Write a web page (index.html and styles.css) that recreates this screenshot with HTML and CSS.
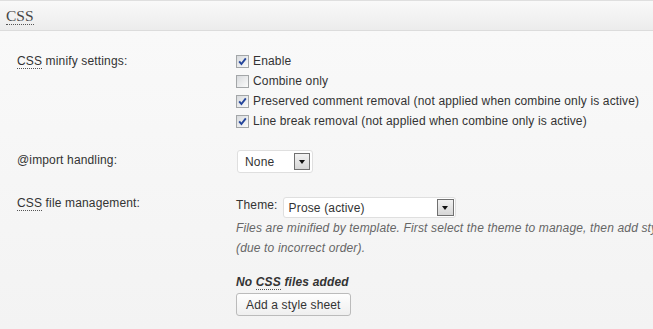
FILE: index.html
```html
<!DOCTYPE html>
<html lang="en">
<head>
    <meta charset="UTF-8">
    <meta name="viewport" content="width=device-width, initial-scale=1.0">
    <title>CSS settings</title>
    <link rel="stylesheet" href="styles.css">
</head>
<body>
    <div class="panel-header">
        <h3><abbr title="Cascading Style Sheets">CSS</abbr></h3>
    </div>
    <div class="panel-body">
        <div class="form-row row-minify">
            <div class="label"><abbr title="Cascading Style Sheets">CSS</abbr> minify settings:</div>
            <div class="field">
                <label class="check">
                    <span class="box"><svg width="11" height="11" viewBox="0 0 11 11"><path d="M2.2 5.4 L4.4 8 L8.8 2.4" /></svg></span>
                    Enable
                </label>
                <label class="check">
                    <span class="box"></span>
                    Combine only
                </label>
                <label class="check">
                    <span class="box"><svg width="11" height="11" viewBox="0 0 11 11"><path d="M2.2 5.4 L4.4 8 L8.8 2.4" /></svg></span>
                    Preserved comment removal (not applied when combine only is active)
                </label>
                <label class="check">
                    <span class="box"><svg width="11" height="11" viewBox="0 0 11 11"><path d="M2.2 5.4 L4.4 8 L8.8 2.4" /></svg></span>
                    Line break removal (not applied when combine only is active)
                </label>
            </div>
        </div>

        <div class="form-row row-import">
            <div class="label">@import handling:</div>
            <div class="field">
                <div class="select select-import">
                    <span class="select-value">None</span>
                    <span class="select-arrow"></span>
                </div>
            </div>
        </div>

        <div class="form-row row-files">
            <div class="label"><abbr title="Cascading Style Sheets">CSS</abbr> file management:</div>
            <div class="field">
                <div class="theme-line">
                    <span class="theme-label">Theme:</span>
                    <div class="select select-theme">
                        <span class="select-value">Prose (active)</span>
                        <span class="select-arrow"></span>
                    </div>
                </div>
                <p class="desc">Files are minified by template. First select the theme to manage, then add style sheets. Files can be removed from the list if minification fails<br>(due to incorrect order).</p>
                <p class="empty">No <abbr title="Cascading Style Sheets">CSS</abbr> files added</p>
                <button class="btn">Add a style sheet</button>
            </div>
        </div>
    </div>
</body>
</html>
```

FILE: styles.css
```css
html, body {
    height: 100%;
}

body {
    margin: 0;
    display: flex;
    flex-direction: column;
    background-color: #f6f6f6;
    color: #333;
    font-family: "Liberation Sans", Arial, sans-serif;
    font-size: 12px;
    letter-spacing: 0.15px;
    overflow: hidden;
}

abbr {
    text-decoration: none;
    border-bottom: 1px dotted #555;
}

.panel-header {
    flex: none;
    height: 29px;
    padding-left: 6px;
    border-top: 1px solid #dfdfdf;
    border-bottom: 1px solid #dcdcdc;
    background: linear-gradient(#f9f9f9, #ececec);
}

.panel-header h3 {
    margin: 0;
    padding-top: 1px;
    font-family: "Liberation Serif", Georgia, serif;
    font-size: 15.5px;
    font-weight: normal;
    letter-spacing: 0;
    line-height: 28px;
    color: #464646;
}

.panel-body {
    flex: 1;
    min-height: 0;
    overflow: hidden;
    padding: 20px 0 0 17px;
    background: linear-gradient(#f9f9f9, #f3f3f3);
}

.form-row {
    display: grid;
    grid-template-columns: 219px 1fr;
    align-items: start;
}

.label {
    line-height: 20px;
}

.row-import {
    margin-top: 19px;
}

.row-files {
    margin-top: 20px;
}

.check {
    display: flex;
    align-items: center;
    gap: 4px;
    height: 20px;
    white-space: nowrap;
}

.box {
    width: 11px;
    height: 11px;
    border: 1px solid #a3a6a8;
    background: linear-gradient(135deg, #d8dadd, #fbfbfb);
    display: flex;
}

.box svg path {
    fill: none;
    stroke: #24459b;
    stroke-width: 1.9;
}

.select {
    display: flex;
    align-items: center;
    justify-content: space-between;
    box-sizing: border-box;
    background-color: #fff;
    border: 1px solid #dfdfdf;
    border-radius: 3px;
}

.select-import {
    width: 76px;
    height: 23px;
    margin-left: 1px;
    padding: 0 2px 0 7px;
}

.select-theme {
    width: 173px;
    height: 21px;
    margin-top: 4px;
    padding: 0 1px 0 5px;
}

.select-arrow {
    position: relative;
    width: 14px;
    height: 15px;
    border: 1px solid #707070;
    background: linear-gradient(#f2f2f2, #d6d6d6);
}

.select-theme .select-arrow {
    width: 15px;
}

.select-arrow::after {
    content: "";
    position: absolute;
    left: 50%;
    top: 6px;
    margin-left: -3px;
    border-left: 3.5px solid transparent;
    border-right: 3.5px solid transparent;
    border-top: 4px solid #111;
}

.theme-line {
    display: flex;
    align-items: flex-start;
    gap: 5px;
}

.theme-label {
    margin-top: 2px;
    line-height: 20px;
}

.desc {
    margin: 0;
    line-height: 20px;
    font-style: italic;
    color: #666;
    white-space: nowrap;
}

.empty {
    margin: 14px 0 0;
    line-height: 20px;
    font-style: italic;
    font-weight: bold;
}

.btn {
    margin-top: 1px;
    height: 23px;
    padding: 0 9px;
    border: 1px solid #bbb;
    border-radius: 3px;
    background: linear-gradient(#fefefe, #efefef);
    color: #333;
    font-family: inherit;
    font-size: 12px;
    letter-spacing: 0.15px;
}
```
